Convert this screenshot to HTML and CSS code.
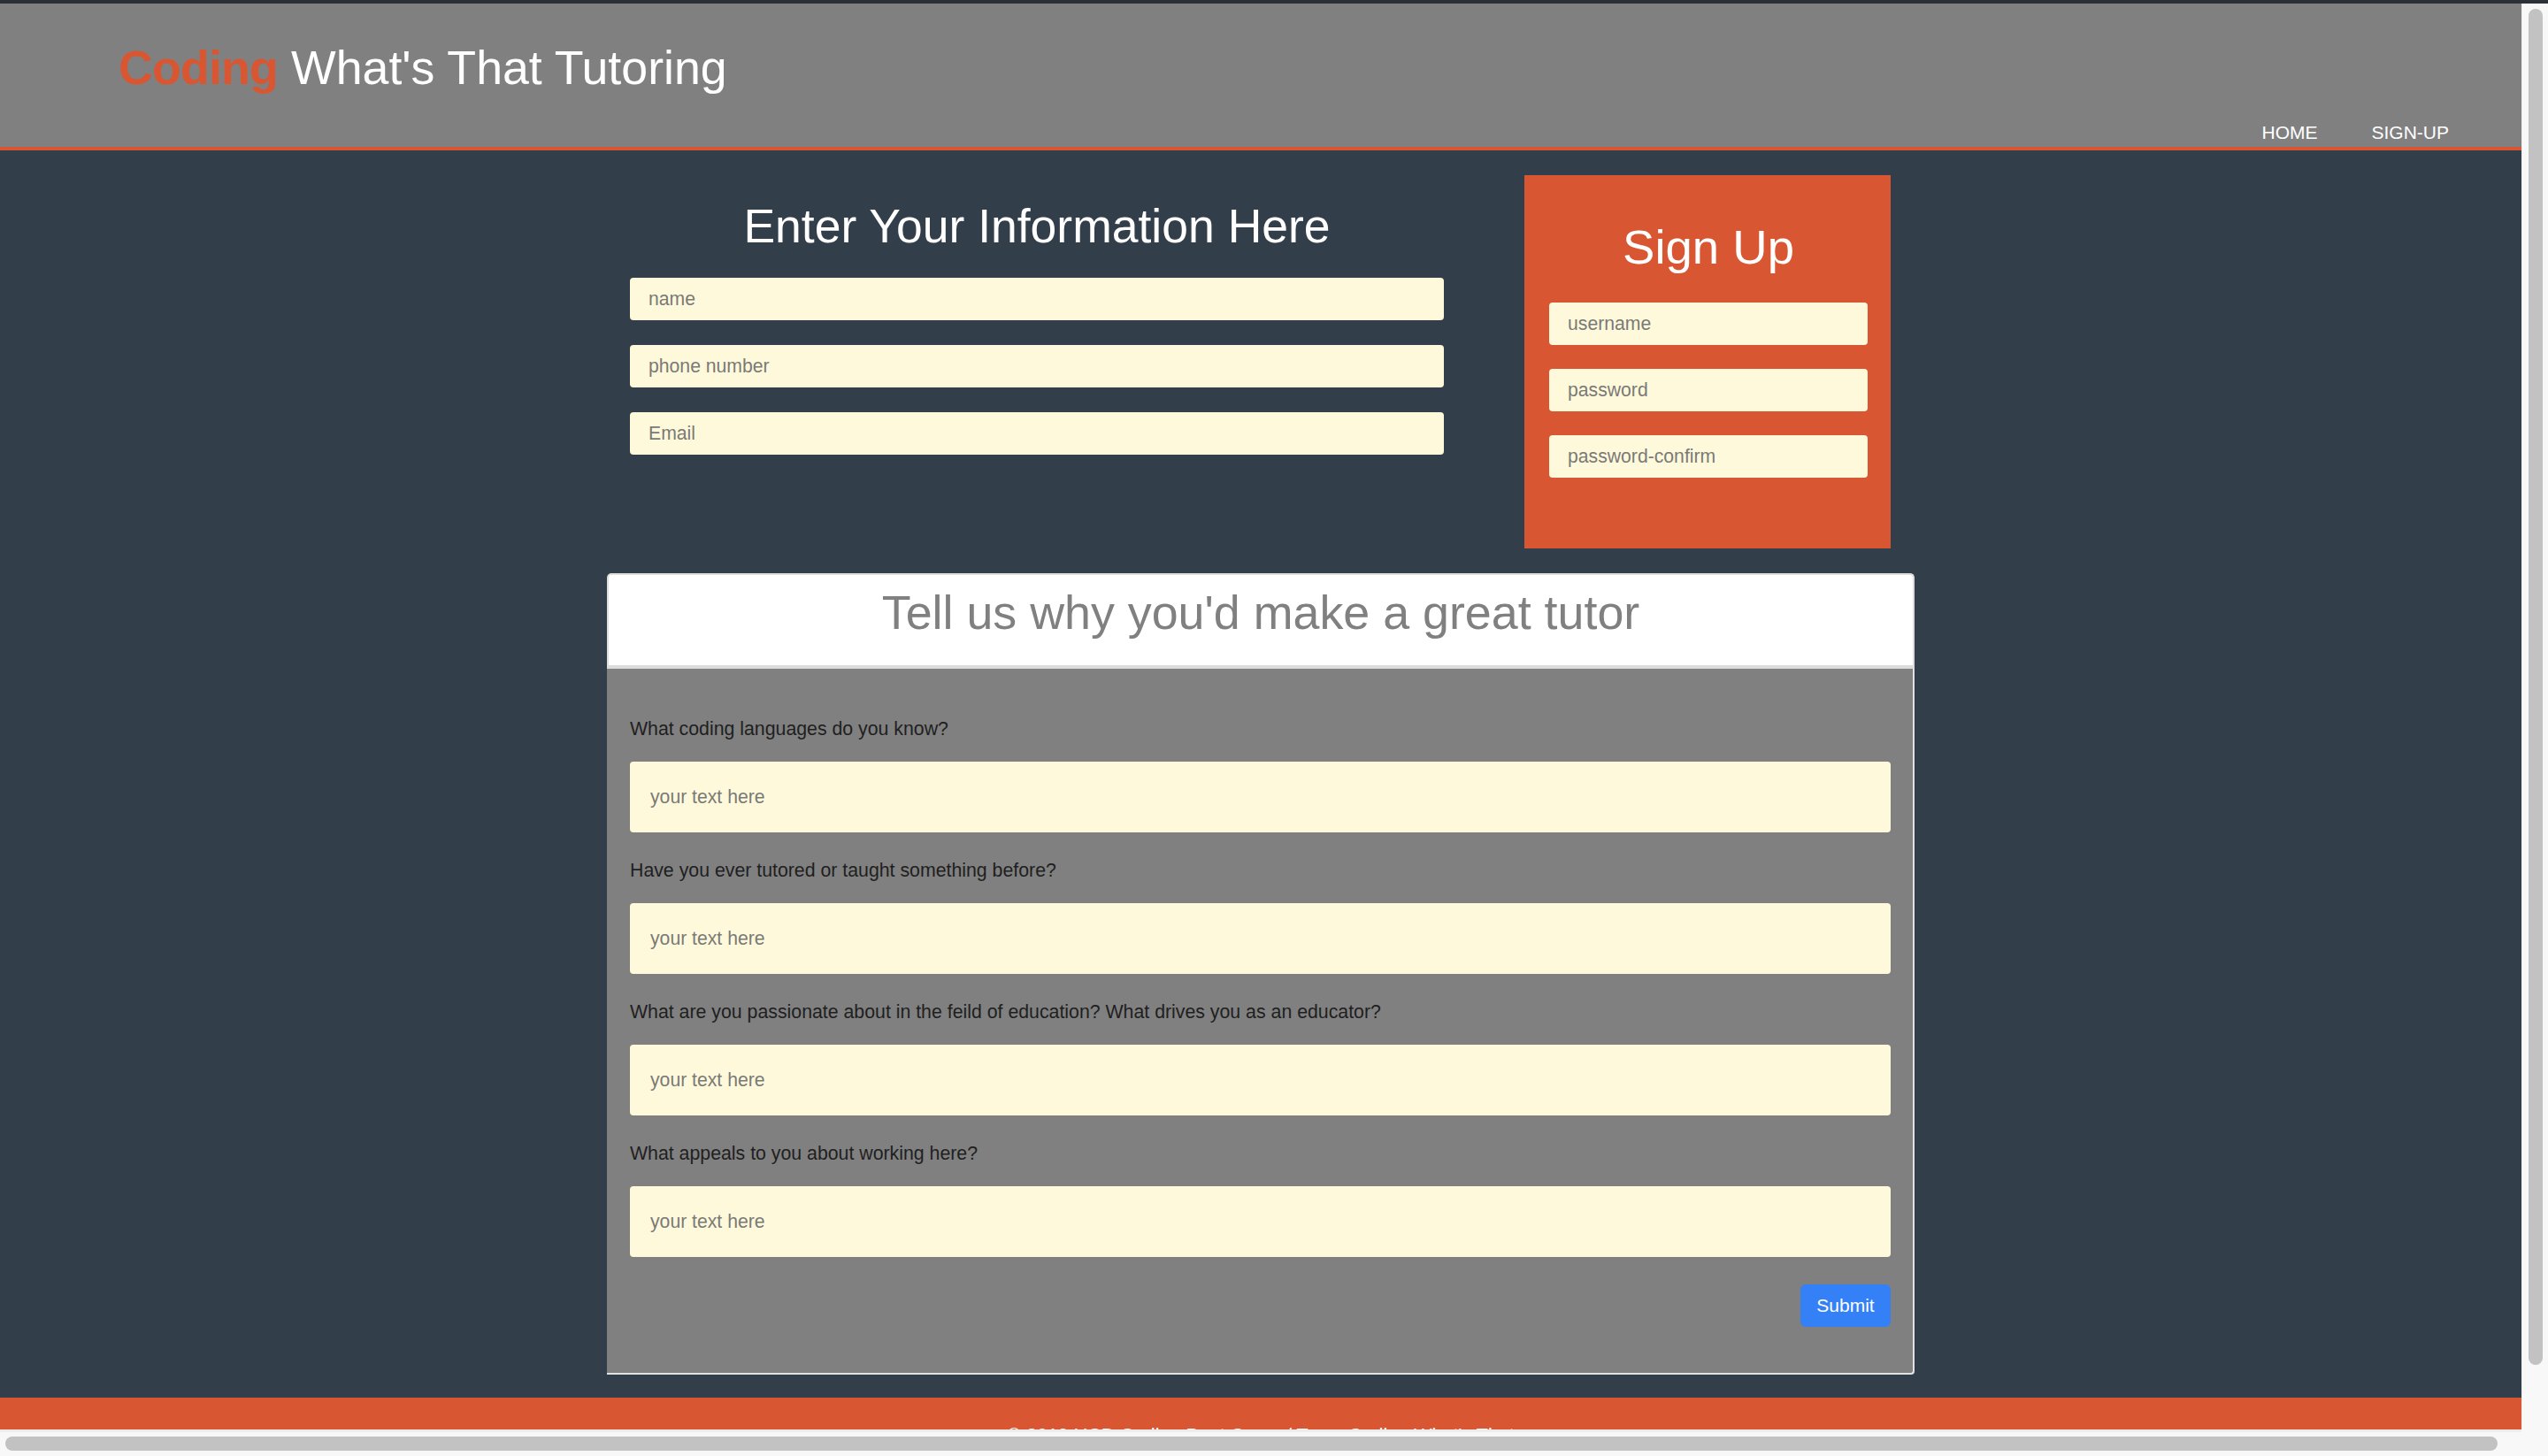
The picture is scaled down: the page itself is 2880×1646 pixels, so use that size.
FILE: index.html
```html
<!DOCTYPE html>
<html lang="en">
<head>
<meta charset="utf-8">
<title>Coding What's That Tutoring - Sign Up</title>
<link rel="stylesheet" href="styles.css">
</head>
<body>
<div class="screen">
  <div class="topline"></div>
  <div class="frame">
    <div class="viewport">
      <div class="page">
        <header class="site-header">
          <div class="logo"><span class="logo-accent">Coding</span> What's That Tutoring</div>
          <nav class="nav">
            <a class="nav-link" href="#">HOME</a>
            <a class="nav-link" href="#">SIGN-UP</a>
          </nav>
        </header>
        <main class="main">
          <div class="container">
            <div class="top-row">
              <section class="info">
                <h2 class="info-title">Enter Your Information Here</h2>
                <div class="info-fields">
                  <input class="field" type="text" placeholder="name">
                  <input class="field" type="text" placeholder="phone number">
                  <input class="field" type="text" placeholder="Email">
                </div>
              </section>
              <section class="signup">
                <h2 class="signup-title">Sign Up</h2>
                <div class="signup-fields">
                  <input class="field" type="text" placeholder="username">
                  <input class="field" type="text" placeholder="password">
                  <input class="field" type="text" placeholder="password-confirm">
                </div>
              </section>
            </div>
            <section class="card">
              <div class="card-head">
                <h2 class="card-title">Tell us why you'd make a great tutor</h2>
              </div>
              <div class="card-body">
                <div class="question">
                  <label class="q-label">What coding languages do you know?</label>
                  <input class="answer" type="text" placeholder="your text here">
                </div>
                <div class="question">
                  <label class="q-label">Have you ever tutored or taught something before?</label>
                  <input class="answer" type="text" placeholder="your text here">
                </div>
                <div class="question">
                  <label class="q-label">What are you passionate about in the feild of education? What drives you as an educator?</label>
                  <input class="answer" type="text" placeholder="your text here">
                </div>
                <div class="question">
                  <label class="q-label">What appeals to you about working here?</label>
                  <input class="answer" type="text" placeholder="your text here">
                </div>
                <div class="actions">
                  <button class="submit" type="button">Submit</button>
                </div>
              </div>
            </section>
          </div>
        </main>
        <footer class="footer">
          <p class="footer-text">© 2019 UCD Coding Boot Camp / Team Coding What's That</p>
        </footer>
      </div>
    </div>
    <div class="vscroll"><div class="vthumb"></div></div>
    <div class="hscroll"><div class="hthumb"></div></div>
    <div class="corner"></div>
  </div>
</div>
</body>
</html>
```

FILE: styles.css
```css
* {
  box-sizing: border-box;
}

html, body {
  margin: 0;
  padding: 0;
  height: 1646px;
  overflow: hidden;
  font-family: "Liberation Sans", Arial, Helvetica, sans-serif;
}

.screen {
  display: flex;
  flex-direction: column;
  width: 2880px;
  height: 1646px;
}

.topline {
  height: 4px;
  background: #2d3034;
  flex: none;
}

.frame {
  flex: 1;
  display: grid;
  grid-template-columns: 2850px 30px;
  grid-template-rows: 1612px 30px;
}

.viewport {
  overflow: hidden;
  background: #323f4b;
}

/* header */
.site-header {
  height: 166px;
  background: #808080;
  border-bottom: 4px solid #d85632;
  display: flex;
  justify-content: space-between;
  align-items: flex-start;
}

.logo {
  padding-top: 45px;
  padding-left: 134px;
  font-size: 53.7px;
  line-height: 54px;
  color: #ffffff;
  white-space: nowrap;
}

.logo-accent {
  color: #d85632;
  font-weight: bold;
  letter-spacing: -0.8px;
}

.nav {
  display: flex;
  gap: 61px;
  padding-top: 135px;
  padding-right: 82px;
}

.nav-link {
  color: #ffffff;
  text-decoration: none;
  font-size: 21px;
  line-height: 21px;
}

/* main */
.main {
  padding-top: 28px;
  padding-bottom: 26px;
}

.container {
  width: 1478px;
  margin: 0 auto;
}

.top-row {
  display: flex;
  align-items: flex-start;
  padding-left: 26px;
  gap: 91px;
}

.info {
  width: 920px;
}

.info-title {
  margin: 31px 0 32px;
  font-size: 53.5px;
  line-height: 53px;
  font-weight: normal;
  color: #ffffff;
  text-align: center;
}

.info-fields {
  display: flex;
  flex-direction: column;
  gap: 28px;
}

.field {
  display: block;
  width: 100%;
  height: 48px;
  border: none;
  border-radius: 4px;
  background: #fff9db;
  padding: 0 21px;
  font-family: inherit;
  font-size: 21.2px;
  color: #333333;
  outline: none;
}

.field::placeholder,
.answer::placeholder {
  color: #7a7a76;
}

.signup {
  width: 414px;
  height: 422px;
  background: #d85632;
  padding: 55px 26px 80px 28px;
}

.signup-title {
  margin: 0 0 36px;
  font-size: 54.5px;
  line-height: 53px;
  font-weight: normal;
  color: #ffffff;
  text-align: center;
}

.signup-fields {
  display: flex;
  flex-direction: column;
  gap: 27px;
}

/* card */
.card {
  margin-top: 28px;
}

.card-head {
  background: #ffffff;
  border: 2px solid #dedede;
  border-bottom: 4px solid #dcdcdc;
  border-radius: 5px 5px 0 0;
  padding: 16px 0 33px;
}

.card-title {
  margin: 0;
  font-size: 53.8px;
  line-height: 53px;
  font-weight: normal;
  color: #808080;
  text-align: center;
}

.card-body {
  background: #808080;
  border-right: 2px solid #e2e2e2;
  border-bottom: 2px solid #e2e2e2;
  border-radius: 0 0 4px 0;
  padding: 56px 25px 52px 26px;
}

.question {
  margin-bottom: 31px;
}

.question:last-of-type {
  margin-bottom: 0;
}

.q-label {
  display: block;
  font-size: 21.3px;
  line-height: 24px;
  color: #1f1f1f;
  margin-bottom: 25px;
}

.answer {
  display: block;
  width: 100%;
  height: 80px;
  border: none;
  border-radius: 4px;
  background: #fff9db;
  padding: 0 23px;
  font-family: inherit;
  font-size: 21.2px;
  color: #333333;
  outline: none;
}

.actions {
  display: flex;
  justify-content: flex-end;
  margin-top: 20px;
}

.submit {
  width: 102px;
  height: 48px;
  border: none;
  border-radius: 6px;
  background: #3480f6;
  color: #ffffff;
  font-family: inherit;
  font-size: 21px;
  padding: 0;
}

/* footer */
.footer {
  background: #d85632;
  height: 120px;
  padding-top: 32px;
}

.footer-text {
  margin: 0;
  font-size: 21.5px;
  line-height: 22px;
  color: #ffffff;
  text-align: center;
}

/* fake scrollbars */
.vscroll {
  background: #f8f8f8;
  border-left: 1px solid #ececec;
  padding: 6px 6px 73px 7px;
}

.vthumb {
  height: 100%;
  background: #c2c2c2;
  border-radius: 8px;
}

.hscroll {
  background: #f8f8f8;
  border-top: 3px solid #ededed;
  padding: 5px 27px 6px 6px;
}

.hthumb {
  height: 100%;
  background: #c2c2c2;
  border-radius: 8px;
}

.corner {
  background: #f8f8f8;
}
```
